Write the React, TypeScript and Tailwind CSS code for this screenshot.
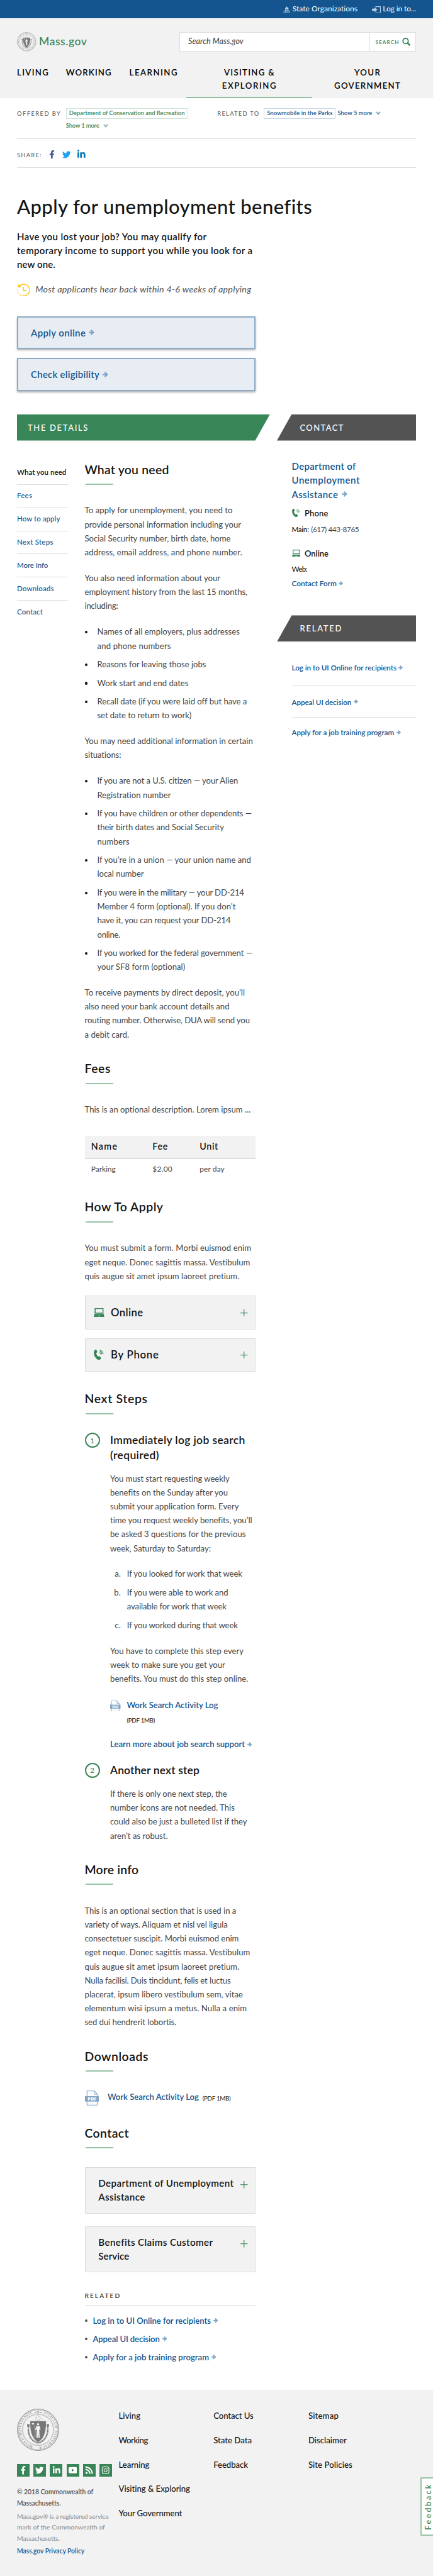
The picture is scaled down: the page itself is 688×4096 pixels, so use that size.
import React, { useLayoutEffect, useRef } from "react";
import { FaFacebookF, FaInstagram, FaLinkedinIn, FaRss, FaTwitter } from "react-icons/fa";

type LineData = [string, number];

/** One line of text whose tracking is set so that it spans `w` pixels. */
function T({ w, children, className = "", vertical = false }: { w: number; children: string; className?: string; vertical?: boolean }) {
  const ref = useRef<HTMLSpanElement>(null);
  useLayoutEffect(() => {
    const el = ref.current;
    if (!el) return;
    el.style.letterSpacing = "0.01px";
    const box = getComputedStyle(el);
    const size = parseFloat(vertical ? box.height : box.width);
    el.style.letterSpacing = `${((w - size) / (children.length - 1)).toFixed(3)}px`;
  }, [w, children, vertical]);
  return (
    <span ref={ref} className={`block w-fit whitespace-nowrap ${className}`}>
      {children}
    </span>
  );
}

const Lines = ({ lines }: { lines: LineData[] }) => (
  <>
    {lines.map(([text, w]) => (
      <T key={text} w={w}>{text}</T>
    ))}
  </>
);

const Arrow = ({ className = "size-[7.5px] ml-[4px]" }: { className?: string }) => (
  <svg viewBox="0 0 16 16" className={`shrink-0 text-[#82a5c6] ${className}`} fill="currentColor">
    <path d="M0 6h7.8L4.6 2.9 7.7 0 16 8l-8.3 8-3.1-2.9L7.8 10H0z" />
  </svg>
);

const Chevron = ({ className }: { className: string }) => (
  <svg viewBox="0 0 12 9" className={`ml-[6px] h-[6px] w-[8px] ${className}`} fill="none" stroke="currentColor" strokeWidth="3">
    <path d="M1.5 1.2 6 6.5l4.500-5.300" />
  </svg>
);

const Laptop = ({ className }: { className: string }) => (
  <svg viewBox="0 0 25 21" className={`shrink-0 text-[#388557] ${className}`} fill="currentColor">
    <path fillRule="evenodd" d="M2 0h21v13H2zm2.200 2v9h16.600V2z" />
    <path fillRule="evenodd" d="M1.500 14h22L25 21H0zm8.500 4-.5 1.500h6L15 18z" />
  </svg>
);

const PhoneIcon = ({ className }: { className: string }) => (
  <svg viewBox="0 0 24 25" className={`shrink-0 text-[#388557] ${className}`} fill="currentColor">
    <path d="M2.500.8C5-.6 6.700.2 7.600 3.200c.8 2.500.6 3.400-1 4.500-1.200 1-.8 2.600.8 5.400 1.500 2.600 2.600 3.700 4 3.300 2-.7 2.700-.3 4.500 1.700 2 2.200 1.800 3.900-.6 5.500-4 2.600-9-.4-12.300-6.200C-.5 11.600-1.300 3.300 2.500.8z" />
    <g fill="none" stroke="currentColor" strokeWidth="1.700">
      <path d="M13.500 7.200c1.800.6 2.800 1.900 2.900 3.900" />
      <path d="M14 4.300c3 .8 5 3.200 5.400 6.600" />
      <path d="M14.500 1.300c4.500 1.200 7.500 5 8 9.600" />
    </g>
  </svg>
);

const Capitol = () => (
  <svg viewBox="0 0 17 16" className="h-[10.800px] w-[11.400px] text-[#b9cee0]" fill="currentColor">
    <path d="M8 0h1v2h-1z" />
    <path d="M4.500 6c.2-2.600 2-4.200 4-4.200s3.800 1.600 4 4.200zM4 6.700h9V8H4z" />
    <path d="M4.500 8.500h1.300v2H4.500zM7 8.500h1v2H7zM9 8.500h1v2H9zM11.200 8.500h1.300v2h-1.300zM1 10.500h15V12H1zM1 12.500h2v2.200H1zM4.500 12.500h2v2.200h-2zM7.700 12.500h1.600v2.200H7.700zM10.500 12.500h2v2.200h-2zM14 12.500h2v2.200h-2zM0 14.500h17V16H0z" />
  </svg>
);

const Login = () => (
  <svg viewBox="0 0 21 16" className="h-[10.800px] w-[14px] text-[#b9cee0]" fill="currentColor">
    <path d="M0 5.500h6V2l7 6-7 6v-3.500H0z" />
    <path d="M8 0h13v16H8v-1.700h11.300V1.700H8z" />
  </svg>
);

const Pdf = ({ className }: { className: string }) => (
  <svg viewBox="0 0 34 36" className={`shrink-0 ${className}`}>
    <path d="M5 1h18l6.500 8v26H5z" fill="#fff" stroke="#82a5c6" strokeWidth="1.700" />
    <path d="M22 1v8h7.500" fill="none" stroke="#82a5c6" strokeWidth="1.700" />
    <rect y="13.500" width="34" height="13" fill="#82a5c6" />
    <text x="17" y="24" textAnchor="middle" fontSize="11" fontWeight="800" fill="#fff" className="font-['Open_Sans',sans-serif]">PDF</text>
  </svg>
);

const Clock = () => (
  <svg viewBox="0 0 30 30" className="size-[20.200px] shrink-0" fill="none" stroke="#f6c51b" strokeWidth="2.200">
    <path d="M5.500 6A13.800 13.800 0 1 1 12 28.500" />
    <path d="M10 28a14 14 0 0 1-8.600-14.500" strokeDasharray="2.500 2.300" />
    <path d="M3 .8 1.400 9.300l8.300-1z" fill="#f6c51b" stroke="none" />
    <path d="M15 8v8h7.500" />
  </svg>
);

const Search = () => (
  <svg viewBox="0 0 20 20" className="h-[13px] w-[13.500px]" fill="none" stroke="#388557">
    <circle cx="8" cy="8" r="6.500" strokeWidth="2.800" />
    <path d="m12.500 12.500 6 6" strokeWidth="4" />
  </svg>
);

function Seal({ className, bg = "#f2f2f2" }: { className: string; bg?: string }) {
  return (
    <svg viewBox="0 0 100 100" className={`shrink-0 ${className}`} fill="none" stroke="#777">
      <circle cx="50" cy="50" r="49.200" strokeWidth="1.200" />
      <circle cx="50" cy="50" r="47.200" strokeWidth=".7" />
      <circle cx="50" cy="50" r="37.500" strokeWidth="1.200" strokeDasharray=".8 .8" />
      <circle cx="50" cy="50" r="36.200" strokeWidth=".5" />
      <defs>
        <path id="seal-ring" d="M50 90.500a40.500 40.500 0 1 1 .1 0" />
      </defs>
      <text fontSize="8.300" fill="#777" stroke="none" className="font-['Liberation_Serif',serif]">
        <textPath href="#seal-ring" startOffset="12" textLength="103">MASSACHUSETTENSIS.</textPath>
      </text>
      <text fontSize="8.300" fill="#777" stroke="none" className="font-['Liberation_Serif',serif]">
        <textPath href="#seal-ring" startOffset="140" textLength="112">SIGILLUM REIPUBLICÆ</textPath>
      </text>
      <path d="M42 8.500h3m10 0h3" strokeWidth="2" />
      <circle cx="50" cy="8.500" r="2.300" strokeWidth="1" />
      <path d="M44 25c1-5 3-8 6-9l8 8 1 2M46 27h9" stroke="#999" strokeWidth="1" />
      <path d="M27 38v12c0 14 8 28 23 31 15-3 23-17 23-31V38" strokeWidth="3.500" strokeDasharray="2.500 .7" />
      <path d="M24 37h6v5h-6zM70 37h6v5h-6z" fill="#777" stroke="none" />
      <path d="M31 29h38c.5 22-2 40-19 51C33 69 30.500 51 31 29z" fill="#777" stroke={bg} strokeWidth=".8" />
      <path d="m38 32 .9 2.300 2.500.1-2 1.500.7 2.400-2.100-1.400-2.100 1.400.7-2.400-2-1.500 2.500-.1z" fill={bg} stroke="none" />
      <circle cx="50" cy="37" r="2.600" fill={bg} stroke="none" />
      <path d="M46 41h8l2 9h-2l-1-3v8l1 14h-3l-1-12-1 12h-3l1-14v-8l-2 4-2-1z" fill={bg} stroke="none" />
      <path d="M42 38c1.500 9 1.500 20 0 30" stroke={bg} strokeWidth=".8" />
    </svg>
  );
}

const H2 = ({ w, children, className = "" }: { w: number; children: string; className?: string }) => (
  <div className={`h-[37.400px] text-[#141414] ${className}`}>
    <h2 className="text-[19.400px] leading-[26px] font-semibold">
      <T w={w}>{children}</T>
    </h2>
    <div className="mt-[9.400px] ml-[1.500px] h-[2px] w-[43.500px] -skew-x-[30deg] bg-[#98c4a9]" />
  </div>
);

const P = ({ lines, className = "" }: { lines: LineData[]; className?: string }) => (
  <p className={className}>
    <Lines lines={lines} />
  </p>
);

const Bullets = ({ items, className = "" }: { items: LineData[][]; className?: string }) => (
  <ul className={`flex flex-col gap-[7.400px] ${className}`}>
    {items.map((lines) => (
      <li key={lines[0][0]} className="flex">
        <span className="mt-[9.800px] mr-[15.800px] size-[4.200px] shrink-0 rounded-full bg-[#141414]" />
        <div>
          <Lines lines={lines} />
        </div>
      </li>
    ))}
  </ul>
);

const Plus = () => (
  <svg viewBox="0 0 12 12" className="size-[11.500px] shrink-0" stroke="#388557" strokeWidth="1.300">
    <path d="M6 0v12M0 6h12" />
  </svg>
);

const CalloutLink = ({ w, children, className = "" }: { w: number; children: string; className?: string }) => (
  <a className={`flex h-[52.800px] w-[379px] items-center border-2 border-[#8aabc9] bg-[#e8edf4] pl-[20px] text-[15px] font-semibold text-[#14558f] shadow-[0_2px_3px_rgba(0,0,0,0.3)] ${className}`}>
    <T w={w}>{children}</T>
    <Arrow className="ml-[5px] size-[9px]" />
  </a>
);

const IconAccordion = ({ icon, w, children, className = "" }: { icon: React.ReactNode; w: number; children: string; className?: string }) => (
  <div className={`flex h-[53.900px] items-center border border-[#dcdcdc] bg-[#f2f2f2] pr-[11.500px] pl-[13.500px] text-[#141414] ${className}`}>
    <span className="w-[27px]">{icon}</span>
    <T w={w} className="text-[16.800px] leading-[22px] font-semibold">{children}</T>
    <span className="ml-auto"><Plus /></span>
  </div>
);

const ContactAccordion = ({ lines, className = "" }: { lines: LineData[]; className?: string }) => (
  <div className={`flex items-start justify-between border border-[#dcdcdc] bg-[#f2f2f2] pt-[13px] pr-[11.500px] pl-[20.800px] text-[#141414] ${className}`}>
    <div className="text-[15.200px] leading-[22.200px] font-semibold">
      <Lines lines={lines} />
    </div>
    <span className="mt-[8px]"><Plus /></span>
  </div>
);

const StepNumber = ({ children }: { children: string }) => (
  <span className="flex size-[24px] shrink-0 items-center justify-center rounded-full border-2 border-[#388557] text-[11.500px] leading-none font-medium text-[#388557]">
    {children}
  </span>
);

const SideBanner = ({ w, children, className = "" }: { w: number; children: string; className?: string }) => (
  <div className={`h-[42px] w-[221px] bg-[#535353] pt-[11px] pl-[36.500px] text-[13px] leading-[21px] font-medium text-white [clip-path:polygon(10.63%_0,100%_0,100%_100%,0_100%)] ${className}`}>
    <T w={w}>{children}</T>
  </div>
);

const sectionLinks: LineData[] = [
  ["What you need", 78.5], ["Fees", 24], ["How to apply", 68.5], ["Next Steps", 57.5],
  ["More Info", 49.5], ["Downloads", 58.5], ["Contact", 41],
];

const footerLinks: LineData[][] = [
  [["Living", 34.7], ["Working", 47], ["Learning", 49], ["Visiting & Exploring", 113.6], ["Your Government", 101]],
  [["Contact Us", 63.6], ["State Data", 61], ["Feedback", 55]],
  [["Sitemap", 48], ["Disclaimer", 61], ["Site Policies", 70]],
];

const YouTube = () => (
  <svg viewBox="0 0 20 20" className="size-[13.500px]">
    <rect y="2.500" width="20" height="15" rx="4" fill="#fff" />
    <path d="m7.500 6.700 6 3.300-6 3.300z" fill="#388557" />
  </svg>
);

export default function App() {
  return (
    <div className="relative h-[4096px] w-[688px] overflow-hidden bg-white font-['Lato',sans-serif] text-[#141414]">
      <div className="flex h-[28.900px] bg-[#14558f] pt-[4px] pl-[449.500px] text-[12px] leading-[20px] text-white">
        <span className="pt-[5.500px]"><Capitol /></span>
        <T w={103.5} className="ml-[3.800px]">State Organizations</T>
        <span className="ml-[22.800px] pt-[5.500px]"><Login /></span>
        <T w={53} className="ml-[3.500px]">Log in to...</T>
      </div>

      <header className="h-[127.600px] bg-[#f2f2f2] px-[27px] pt-[22.600px]">
        <div className="flex h-[31px] justify-between">
          <div className="flex">
            <Seal className="size-[30.500px]" />
            <T w={76} className="ml-[4.500px] text-[17.500px] leading-[29.400px] font-medium text-[#388557]">Mass.gov</T>
          </div>
          <div className="flex w-[376.500px] border border-[#dcdcdc] bg-white">
            <div className="w-[302px] border-r border-[#dcdcdc] pl-[13.500px] text-[12.600px] leading-[27.400px] text-[#383838] italic">
              <T w={88}>Search Mass.gov</T>
            </div>
            <div className="flex items-center pl-[9px] text-[8.200px] font-semibold text-[#388557]">
              <T w={37}>SEARCH</T>
              <span className="ml-[4px]"><Search /></span>
            </div>
          </div>
        </div>
        <nav className="mt-[22.900px] flex h-[51.100px] text-[13.200px] leading-[20.700px] font-semibold whitespace-nowrap text-black">
          <div className="w-[77.800px] shrink-0"><T w={50}>LIVING</T></div>
          <div className="w-[100.800px] shrink-0"><T w={72}>WORKING</T></div>
          <div className="w-[90.900px] shrink-0"><T w={76}>LEARNING</T></div>
          <div className="relative flex w-[200px] shrink-0 flex-col items-center">
            <T w={80}>VISITING &</T>
            <T w={86}>EXPLORING</T>
            <div className="absolute bottom-0 left-0 h-[2px] w-full -skew-x-[30deg] bg-[#8fbda3]" />
          </div>
          <div className="ml-[34.500px] flex flex-col items-center">
            <T w={41}>YOUR</T>
            <T w={105}>GOVERNMENT</T>
          </div>
        </nav>
      </header>

      <div className="px-[27px]">
        <div className="flex h-[65px] border-b border-[#dcdcdc] pt-[15.500px] text-[9.400px] leading-[16px] font-semibold">
          <T w={69} className="pt-px font-normal text-[#535353]">OFFERED BY</T>
          <div className="ml-[7.500px] w-[194px] text-[#388557]">
            <div className="h-[17px] border border-[#cfe3d7] bg-white px-[4px] leading-[14px]">
              <T w={184}>Department of Conservation and Recreation</T>
            </div>
            <div className="mt-[3px] flex items-center">
              <T w={53}>Show 1 more</T>
              <Chevron className="text-[#8fbda3]" />
            </div>
          </div>
          <T w={66} className="ml-[46.500px] pt-px font-normal text-[#535353]">RELATED TO</T>
          <div className="ml-[7px] h-[17px] w-[113.500px] border border-[#c8d7e5] px-[4px] leading-[14px] text-[#14558f]">
            <T w={104}>Snowmobile in the Parks</T>
          </div>
          <div className="ml-[3.500px] flex h-[16px] items-center text-[#14558f]">
            <T w={55}>Show 5 more</T>
            <Chevron className="text-[#82a5c6]" />
          </div>
        </div>

        <div className="flex h-[45.700px] border-b border-[#dcdcdc] pt-[17.300px] text-[9.400px] leading-[16px] text-[#535353]">
          <T w={38.5}>SHARE:</T>
          <FaFacebookF className="ml-[9px] h-[13.500px] w-[13px] text-[#3b5998]" />
          <FaTwitter className="ml-[10px] size-[13.500px] text-[#1da1f2]" />
          <FaLinkedinIn className="mt-[-1px] ml-[9.500px] size-[14.500px] text-[#0077b5]" />
        </div>

        <h1 className="mt-[40.500px] text-[31px] leading-[40px] font-medium">
          <T w={469}>Apply for unemployment benefits</T>
        </h1>
        <P
          className="mt-[16.900px] text-[15px] leading-[22.200px] font-semibold"
          lines={[
            ["Have you lost your job? You may qualify for", 301.5],
            ["temporary income to support you while you look for a", 374.5],
            ["new one.", 61],
          ]}
        />
        <div className="mt-[20.100px] flex h-[20.200px] text-[14.300px] leading-[17px] text-[#535353] italic">
          <Clock />
          <T w={343.5} className="ml-[9px]">Most applicants hear back within 4-6 weeks of applying</T>
        </div>
        <CalloutLink w={87} className="mt-[31.100px]">Apply online</CalloutLink>
        <CalloutLink w={109} className="mt-[13.700px]">Check eligibility</CalloutLink>
      </div>

      <main className="mt-[36.700px] flex h-[3141.800px] gap-[11px] px-[27px]">
        <div className="w-[402px]">
          <div className="h-[42px] bg-[#388557] pt-[11px] pl-[17px] text-[13px] leading-[21px] font-medium text-white [clip-path:polygon(0_0,100%_0,94.15%_100%,0_100%)]">
            <T w={95.5}>THE DETAILS</T>
          </div>
          <div className="flex pt-[33.200px]">
            <nav className="w-[80.500px]">
              {sectionLinks.map(([text, w], i) => (
                <div
                  key={text}
                  className={`h-[36.950px] pt-[8.600px] text-[11.500px] leading-[18px] ${i === 0 ? "font-semibold" : "font-medium text-[#14558f]"} ${i < 6 ? "border-b border-[#dcdcdc]" : ""}`}
                >
                  <T w={w}>{text}</T>
                </div>
              ))}
            </nav>

            <article className="ml-[27px] w-[271.500px] text-[13.100px] leading-[22.200px] text-[#444]">
              <H2 w={134}>What you need</H2>
              <P
                className="mt-[29.400px]"
                lines={[
                  ["To apply for unemployment, you need to", 235.4],
                  ["provide personal information including your", 249],
                  ["Social Security number, birth date, home", 232.3],
                  ["address, email address, and phone number.", 250.8],
                ]}
              />
              <P
                className="mt-[18.600px]"
                lines={[
                  ["You also need information about your", 216],
                  ["employment history from the last 15 months,", 259],
                  ["including:", 53.3],
                ]}
              />
              <Bullets
                className="mt-[18.800px]"
                items={[
                  [["Names of all employers, plus addresses", 226.9], ["and phone numbers", 117.2]],
                  [["Reasons for leaving those jobs", 173.3]],
                  [["Work start and end dates", 145.2]],
                  [["Recall date (if you were laid off but have a", 238.3], ["set date to return to work)", 150]],
                ]}
              />
              <P
                className="mt-[18.500px]"
                lines={[["You may need additional information in certain", 267.7], ["situations:", 58.1]]}
              />
              <Bullets
                className="mt-[18.750px]"
                items={[
                  [["If you are not a U.S. citizen — your Alien", 224.2], ["Registration number", 117.2]],
                  [
                    ["If you have children or other dependents —", 246.2],
                    ["their birth dates and Social Security", 201.9],
                    ["numbers", 51.3],
                  ],
                  [["If you’re in a union — your union name and", 244.9], ["local number", 74.2]],
                  [
                    ["If you were in the military — your DD-214", 233.9],
                    ["Member 4 form (optional). If you don’t", 220.3],
                    ["have it, you can request your DD-214", 212.4],
                    ["online.", 36.9],
                  ],
                  [["If you worked for the federal government —", 247], ["your SF8 form (optional)", 140]],
                ]}
              />
              <P
                className="mt-[18.400px]"
                lines={[
                  ["To receive payments by direct deposit, you’ll", 255],
                  ["also need your bank account details and", 230.4],
                  ["routing number. Otherwise, DUA will send you", 262.9],
                  ["a debit card.", 70.7],
                ]}
              />

              <H2 w={41} className="mt-[30.500px]">Fees</H2>
              <P className="mt-[29.200px]" lines={[["This is an optional description. Lorem ipsum ...", 264.2]]} />
              <div className="mt-[30.800px] h-[75px] leading-[22px]">
                <div className="grid h-[37px] grid-cols-[97.500px_75px_1fr] border-b-2 border-[#dcdcdc] bg-[#f2f2f2] pt-[6.400px] pl-[10.300px] text-[14.300px] font-semibold text-[#141414]">
                  <T w={41.3}>Name</T>
                  <T w={24}>Fee</T>
                  <T w={29}>Unit</T>
                </div>
                <div className="grid grid-cols-[97.500px_75px_1fr] pt-[5.400px] pl-[10.300px] text-[12px]">
                  <T w={39}>Parking</T>
                  <T w={31.6}>$2.00</T>
                  <T w={39.5}>per day</T>
                </div>
              </div>

              <H2 w={124.6} className="mt-[25.500px]">How To Apply</H2>
              <P
                className="mt-[29.600px]"
                lines={[
                  ["You must submit a form. Morbi euismod enim", 265],
                  ["eget neque. Donec sagittis massa. Vestibulum", 263.3],
                  ["quis augue sit amet ipsum laoreet pretium.", 246.2],
                ]}
              />
              <IconAccordion icon={<Laptop className="h-[14px] w-[16.800px]" />} w={51.3} className="mt-[20.500px]">Online</IconAccordion>
              <IconAccordion icon={<PhoneIcon className="h-[16.500px] w-[16px]" />} w={76} className="mt-[13.200px]">By Phone</IconAccordion>

              <H2 w={99.6} className="mt-[30.100px]">Next Steps</H2>
              <section className="mt-[29.500px] flex">
                <StepNumber>1</StepNumber>
                <div className="ml-[16.500px]">
                  <h3 className="text-[17.500px] leading-[24px] font-semibold text-[#141414]">
                    <T w={214.5}>Immediately log job search</T>
                    <T w={77.5}>(required)</T>
                  </h3>
                  <P
                    className="mt-[13.300px]"
                    lines={[
                      ["You must start requesting weekly", 190],
                      ["benefits on the Sunday after you", 187.4],
                      ["submit your application form. Every", 204.9],
                      ["time you request weekly benefits, you’ll", 226],
                      ["be asked 3 questions for the previous", 215.9],
                      ["week, Saturday to Saturday:", 160.2],
                    ]}
                  />
                  <ol className="mt-[18.600px] flex flex-col gap-[7.400px]">
                    {(
                      [
                        ["a.", [["If you looked for work that week", 183.4]]],
                        ["b.", [["If you were able to work and", 161], ["available for work that week", 158.4]]],
                        ["c.", [["If you worked during that week", 176.4]]],
                      ] as [string, LineData[]][]
                    ).map(([marker, lines]) => (
                      <li key={marker} className="flex">
                        <span className="mr-[10px] w-[16.800px] text-right">{marker}</span>
                        <div>
                          <Lines lines={lines} />
                        </div>
                      </li>
                    ))}
                  </ol>
                  <P
                    className="mt-[18.600px]"
                    lines={[
                      ["You have to complete this step every", 212.4],
                      ["week to make sure you get your", 183],
                      ["benefits. You must do this step online.", 219.8],
                    ]}
                  />
                  <div className="mt-[20.100px] flex">
                    <Pdf className="mt-[3.200px] h-[17.500px] w-[16.500px]" />
                    <div className="ml-[10px]">
                      <T w={145} className="font-semibold text-[#14558f]">Work Search Activity Log</T>
                      <T w={45} className="mt-[5.100px] text-[9.800px] leading-[14px] text-[#141414]">(PDF 1MB)</T>
                    </div>
                  </div>
                  <div className="mt-[20.500px] flex items-center font-semibold text-[#14558f]">
                    <T w={214.5}>Learn more about job search support</T>
                    <Arrow />
                  </div>
                </div>
              </section>
              <section className="mt-[18.700px] flex">
                <StepNumber>2</StepNumber>
                <div className="ml-[16.500px]">
                  <h3 className="text-[17.500px] leading-[24px] font-semibold text-[#141414]">
                    <T w={142}>Another next step</T>
                  </h3>
                  <P
                    className="mt-[13.900px]"
                    lines={[
                      ["If there is only one next step, the", 186],
                      ["number icons are not needed. This", 198.3],
                      ["could also be just a bulleted list if they", 218],
                      ["aren’t as robust.", 91.7],
                    ]}
                  />
                </div>
              </section>

              <H2 w={85.6} className="mt-[30.100px]">More info</H2>
              <P
                className="mt-[29.500px]"
                lines={[
                  ["This is an optional section that is used in a", 241.3],
                  ["variety of ways. Aliquam et nisl vel ligula", 227.7],
                  ["consectetuer suscipit. Morbi euismod enim", 245.3],
                  ["eget neque. Donec sagittis massa. Vestibulum", 263.3],
                  ["quis augue sit amet ipsum laoreet pretium.", 246.2],
                  ["Nulla facilisi. Duis tincidunt, felis et luctus", 232.6],
                  ["placerat, ipsum libero vestibulum sem, vitae", 251.9],
                  ["elementum wisi ipsum a metus. Nulla a enim", 258],
                  ["sed dui hendrerit lobortis.", 146.1],
                ]}
              />

              <H2 w={101} className="mt-[30.200px]">Downloads</H2>
              <div className="mt-[30.300px] flex h-[24px] leading-[20.600px]">
                <Pdf className="h-[24px] w-[22.500px]" />
                <T w={145} className="ml-[14px] font-semibold text-[#14558f]">Work Search Activity Log</T>
                <T w={45} className="ml-[6px] pt-[1.500px] text-[9.800px] text-[#141414]">(PDF 1MB)</T>
              </div>

              <H2 w={70.2} className="mt-[30.400px]">Contact</H2>
              <ContactAccordion
                className="mt-[29.800px] h-[73.900px]"
                lines={[["Department of Unemployment", 215], ["Assistance", 74]]}
              />
              <ContactAccordion
                className="mt-[20.100px] h-[73px]"
                lines={[["Benefits Claims Customer", 182], ["Service", 49]]}
              />

              <div className="mt-[29.300px] border-b border-[#dcdcdc] pb-[7px] text-[10.200px] leading-[16px] font-medium text-[#141414]">
                <T w={55.7}>RELATED</T>
              </div>
              <ul className="mt-[12.800px] flex flex-col gap-[6.600px] font-semibold text-[#14558f]">
                {(
                  [
                    ["Log in to UI Online for recipients", 188],
                    ["Appeal UI decision", 106.6],
                    ["Apply for a job training program", 185],
                  ] as LineData[]
                ).map(([text, w]) => (
                  <li key={text} className="flex items-center">
                    <span className="mr-[8.700px] size-[4.200px] rounded-full bg-[#535353]" />
                    <T w={w}>{text}</T>
                    <Arrow />
                  </li>
                ))}
              </ul>
            </article>
          </div>
        </div>

        <aside className="w-[221px]">
          <SideBanner w={69}>CONTACT</SideBanner>
          <div className="mt-[29.600px] pl-[23.500px]">
            <div className="text-[15px] leading-[22.200px] font-semibold text-[#14558f]">
              <T w={102}>Department of</T>
              <T w={108}>Unemployment</T>
              <div className="flex items-center">
                <T w={73.5}>Assistance</T>
                <Arrow className="ml-[5.500px] size-[9px]" />
              </div>
            </div>
            <div className="mt-[10.100px] flex items-center text-[13px] leading-[18px] font-semibold">
              <span className="w-[20.500px]"><PhoneIcon className="h-[13.200px] w-[12.800px]" /></span>
              <T w={37.5}>Phone</T>
            </div>
            <div className="mt-[8.200px] flex text-[11.600px] leading-[18px]">
              <T w={27.5} className="font-medium">Main:</T>
              <T w={76.5} className="ml-[3.500px] text-[#444]">(617) 443-8765</T>
            </div>
            <div className="mt-[19.700px] flex items-center text-[13px] leading-[18px] font-semibold">
              <span className="w-[20.500px]"><Laptop className="h-[11.500px] w-[13.500px]" /></span>
              <T w={38}>Online</T>
            </div>
            <T w={25} className="mt-[7px] text-[11.600px] leading-[18px] font-medium">Web:</T>
            <div className="mt-[5.200px] flex items-center text-[12px] leading-[18px] font-semibold text-[#14558f]">
              <T w={71.5}>Contact Form</T>
              <Arrow className="ml-[3.500px] size-[7px]" />
            </div>
          </div>

          <SideBanner w={66} className="mt-[41.600px]">RELATED</SideBanner>
          <div className="pl-[23.500px] text-[11.700px] leading-[18px] font-semibold text-[#14558f]">
            <div className="flex h-[70.400px] items-center border-b border-[#dcdcdc] pt-[12.500px]">
              <T w={167}>Log in to UI Online for recipients</T>
              <Arrow className="ml-[3px] size-[7px]" />
            </div>
            <div className="flex h-[50.400px] items-center border-b border-[#dcdcdc]">
              <T w={95}>Appeal UI decision</T>
              <Arrow className="ml-[3.500px] size-[7px]" />
            </div>
            <div className="mt-[14px] flex items-center">
              <T w={163}>Apply for a job training program</T>
              <Arrow className="ml-[3.500px] size-[7px]" />
            </div>
          </div>
        </aside>
      </main>

      <footer className="flex h-[296px] bg-[#f2f2f2] pt-[30px] pl-[27px]">
        <div className="w-[161.500px] text-[10.400px] leading-[17.400px]">
          <Seal className="size-[67px]" />
          <div className="mt-[20.500px] flex gap-[6.200px] text-[13.500px] text-white">
            {[<FaFacebookF />, <FaTwitter />, <FaLinkedinIn />, <YouTube />, <FaRss />, <FaInstagram />].map((icon, i) => (
              <span key={i} className="flex size-[20px] items-center justify-center bg-[#388557]">{icon}</span>
            ))}
          </div>
          <P
            className="mt-[16.500px] font-semibold text-[#535353]"
            lines={[["© 2018 Commonwealth of", 121.5], ["Massachusetts.", 69.8]]}
          />
          <P
            className="mt-[3.700px] text-[#8a8a8a]"
            lines={[["Mass.gov® is a registered service", 146], ["mark of the Commonwealth of", 140], ["Massachusetts.", 68]]}
          />
          <T w={107.5} className="mt-[2.800px] font-semibold text-[#14558f]">Mass.gov Privacy Policy</T>
        </div>
        {footerLinks.map((column) => (
          <div key={column[0][0]} className="flex w-[150.700px] flex-col gap-[18.700px] pt-px text-[13.200px] leading-[20px] font-medium">
            <Lines lines={column} />
          </div>
        ))}
      </footer>

      <div className="absolute top-[3939px] right-0 flex h-[92.500px] w-[20px] items-center rounded-l-[2px] border-2 border-r-0 border-[#98c4a9] bg-white pl-[3px]">
        <T vertical w={72} className="rotate-180 text-[12.500px] leading-[15px] font-medium text-[#388557] [writing-mode:vertical-rl]">Feedback</T>
      </div>
    </div>
  );
}
